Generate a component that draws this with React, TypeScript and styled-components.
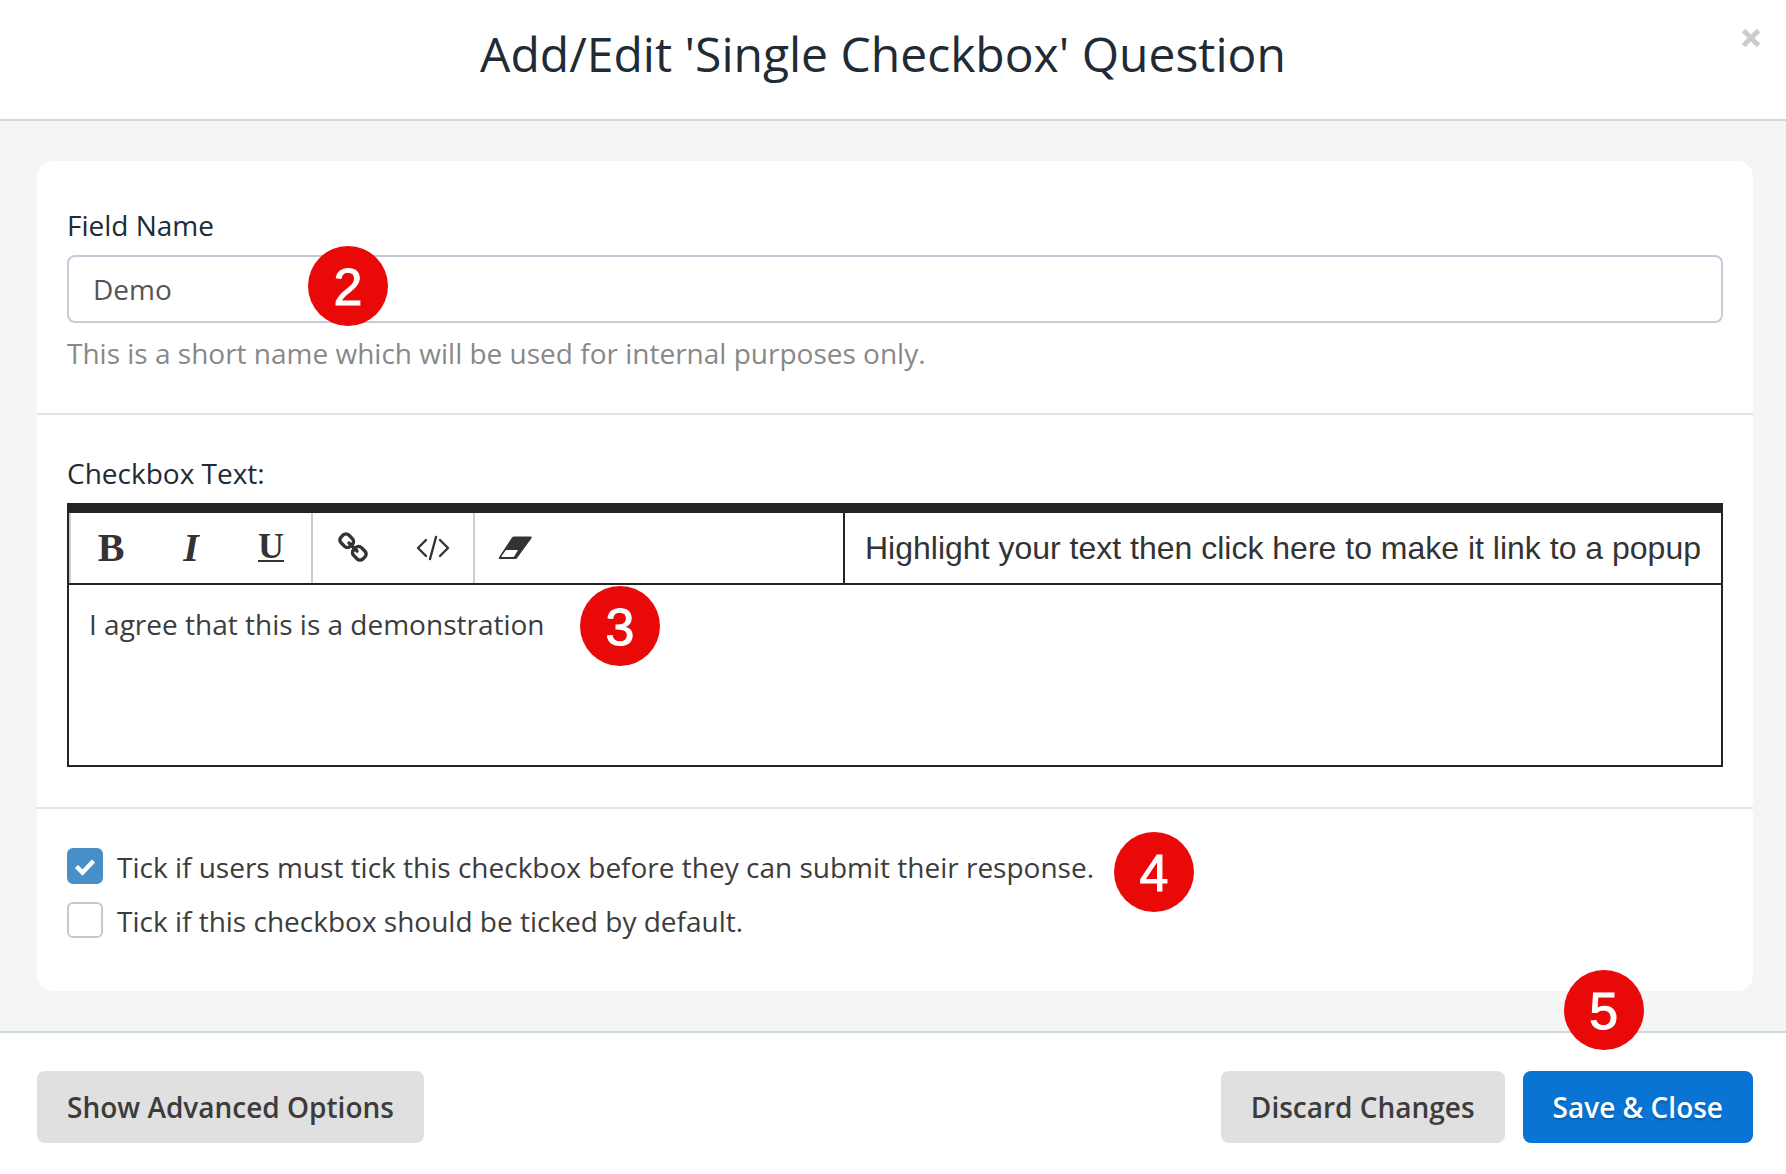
import React from "react";
import styled, { createGlobalStyle } from "styled-components";

const sans = `"Open Sans", "Noto Sans", sans-serif`;
const arial = `"Liberation Sans", Arial, sans-serif`;
const serif = `"Liberation Serif", "Times New Roman", serif`;

const GlobalStyle = createGlobalStyle`
  *, *::before, *::after { box-sizing: border-box; }
  body { margin: 0; background: #fff; }
  button, input, textarea { font: inherit; color: inherit; margin: 0; }
`;

const Dialog = styled.div`
  display: flex;
  flex-direction: column;
  min-height: 100vh;
  background: #fff;
  color: #3c3c3c;
  font: 400 28px/40px ${sans};
`;

const Header = styled.header`
  display: flex;
  align-items: flex-start;
  gap: 15px;
  padding: 20px 25px 31px 40px;
  border-bottom: 2px solid #cfd8dc;
`;

const Title = styled.h1`
  flex: 1;
  margin: 0;
  text-align: center;
  color: #202b36;
  font-size: 48px;
  font-weight: 400;
  line-height: 68px;
`;

const CloseButton = styled.button`
  display: flex;
  margin-top: 8px;
  padding: 0;
  border: 0;
  background: none;
  color: #ccc;
  cursor: pointer;
`;

const Body = styled.main`
  flex: 1;
  padding: 40px 33px 40px 37px;
  background: #f4f6f6;
`;

const Card = styled.form`
  padding: 6px 0 10px;
  border-radius: 16px;
  background: #fff;
`;

const Section = styled.section`
  display: flex;
  flex-direction: column;
  gap: 10px;
  padding: 38px 30px 40px;

  & + & {
    border-top: 2px solid #dfe4e7;
  }
`;

const Label = styled.label`
  color: #202b36;
`;

const Anchor = styled.div`
  position: relative;
  display: flex;
`;

const TextInput = styled.input`
  width: 100%;
  height: 68px;
  padding: 0 24px;
  border: 2px solid #c3cdd7;
  border-radius: 8px;
  background: #fff;
  color: #555;
`;

const Help = styled.p`
  margin: 0;
  color: #888;
`;

const Badge = styled.span<{ $left: number; $top: number }>`
  position: absolute;
  left: ${(p) => p.$left}px;
  top: ${(p) => p.$top}px;
  width: 80px;
  height: 80px;
  border-radius: 50%;
  background: #ea0909;
  color: #fff;
  font: 400 52px/82px ${arial};
  -webkit-text-stroke: 1px #fff;
  text-align: center;
`;

const Editor = styled.div`
  flex: 1;
  display: flex;
  flex-direction: column;
  border: 2px solid #242424;
  border-top-width: 10px;
`;

const Toolbar = styled.div`
  display: flex;
  height: 72px;
  border-bottom: 2px solid #242424;
  color: #333;
`;

const ToolGroup = styled.div`
  display: flex;
  border-left: 2px solid #ccc;
`;

const Tool = styled.button`
  display: flex;
  align-items: center;
  justify-content: center;
  width: 80px;
  padding: 0;
  border: 0;
  background: none;
  cursor: pointer;
`;

const Glyph = styled.span<{ $italic?: boolean }>`
  font: ${(p) => (p.$italic ? "italic" : "normal")} 700 40px/40px ${serif};
`;

const UnderlineGlyph = styled.span`
  height: 28px;
  border-bottom: 2px solid #333;
  font: 700 36px/24px ${serif};
`;

const PopupButton = styled.button`
  margin-left: auto;
  padding: 0 20px;
  border: 0;
  border-left: 2px solid #242424;
  background: none;
  font: 400 32px/40px ${arial};
  cursor: pointer;
`;

const EditArea = styled.textarea`
  display: block;
  width: 100%;
  height: 180px;
  padding: 19px 20px;
  border: 0;
  outline: 0;
  resize: none;
  background: #fff;
`;

const Options = styled.div`
  display: flex;
  flex-direction: column;
  align-items: flex-start;
  gap: 14px;
`;

const Option = styled.label`
  display: flex;
  align-items: flex-start;
  gap: 14px;
`;

const Tick = styled.span`
  position: relative;
  display: flex;
`;

const TickInput = styled.input`
  appearance: none;
  width: 36px;
  height: 36px;
  margin-top: 1px;
  border: 2px solid #c8c8c8;
  border-radius: 6px;
  background: #fff;

  &:checked {
    border-color: #478fc6;
    background: #478fc6;
  }

  & + svg {
    display: none;
  }

  &:checked + svg {
    display: block;
    position: absolute;
    inset: 0;
    pointer-events: none;
  }
`;

const Footer = styled.footer`
  display: flex;
  justify-content: space-between;
  padding: 38px 33px 31px 37px;
  border-top: 2px solid #cfd8dc;
`;

const Actions = styled.div`
  display: flex;
  gap: 18px;
`;

const Button = styled.button<{ $primary?: boolean }>`
  height: 72px;
  padding: 0 30px;
  border: 0;
  border-radius: 8px;
  background: ${(p) => (p.$primary ? "#0a74d4" : "#e0e0e0")};
  color: ${(p) => (p.$primary ? "#fff" : "#3c3c3c")};
  font-weight: 600;
  text-shadow: ${(p) => (p.$primary ? "0 2px 2px rgba(0, 0, 0, 0.2)" : "none")};
  white-space: nowrap;
  cursor: pointer;
`;

function CloseIcon() {
  return (
    <svg width="20" height="20" viewBox="0 0 20 20" aria-hidden="true">
      <path d="M2.5 2.5 17.5 17.5M17.5 2.5 2.5 17.5" stroke="currentColor" strokeWidth="5" />
    </svg>
  );
}

function LinkIcon() {
  return (
    <svg width="30" height="32" viewBox="0 0 30 32" fill="none" stroke="currentColor" strokeWidth="3.4" aria-hidden="true">
      <rect x="-5.5" y="-6.5" width="11" height="13" rx="4" transform="translate(8.7 8.7) rotate(-45)" />
      <rect x="-5.5" y="-6.5" width="11" height="13" rx="4" transform="translate(21.3 21.3) rotate(-45)" />
      <path d="m11 11 8 8" strokeLinecap="round" />
    </svg>
  );
}

function CodeIcon() {
  return (
    <svg width="34" height="26" viewBox="0 0 34 26" fill="none" stroke="currentColor" strokeWidth="2.4" strokeLinecap="round" strokeLinejoin="round" aria-hidden="true">
      <path d="M10 5 2 13l8 8M24 5l8 8-8 8M20 2l-6 22" />
    </svg>
  );
}

function EraserIcon() {
  return (
    <svg width="36" height="24" viewBox="0 0 36 24" aria-hidden="true">
      <path d="M17 .5h16.500q2 0 .8 2L20.500 21.500q-1 1.500-2.500 1.500H3q-2 0-.8-2L15 1.500q.8-1 2-1Z" fill="currentColor" />
      <path d="M9 14h12L17.500 20q-.5.900-1.300.900H5q-1 0-.4-.8Z" fill="#fff" />
    </svg>
  );
}

function CheckIcon() {
  return (
    <svg width="36" height="36" viewBox="0 0 36 36" fill="none" aria-hidden="true">
      <path d="m9.500 19.500 6 6L26.500 14" stroke="#fff" strokeWidth="4.500" />
    </svg>
  );
}

export default function App() {
  return (
    <Dialog role="dialog" aria-labelledby="dialog-title">
      <GlobalStyle />
      <Header>
        <Title id="dialog-title">Add/Edit 'Single Checkbox' Question</Title>
        <CloseButton type="button" aria-label="Close">
          <CloseIcon />
        </CloseButton>
      </Header>

      <Body>
        <Card>
          <Section>
            <Label htmlFor="field-name">Field Name</Label>
            <Anchor>
              <TextInput id="field-name" type="text" defaultValue="Demo" />
              <Badge $left={241} $top={-9}>2</Badge>
            </Anchor>
            <Help>This is a short name which will be used for internal purposes only.</Help>
          </Section>

          <Section>
            <Label htmlFor="checkbox-text">Checkbox Text:</Label>
            <Anchor>
              <Editor>
                <Toolbar>
                  <ToolGroup>
                    <Tool type="button" aria-label="Bold"><Glyph>B</Glyph></Tool>
                    <Tool type="button" aria-label="Italic"><Glyph $italic>I</Glyph></Tool>
                    <Tool type="button" aria-label="Underline"><UnderlineGlyph>U</UnderlineGlyph></Tool>
                  </ToolGroup>
                  <ToolGroup>
                    <Tool type="button" aria-label="Link"><LinkIcon /></Tool>
                    <Tool type="button" aria-label="Code"><CodeIcon /></Tool>
                  </ToolGroup>
                  <ToolGroup>
                    <Tool type="button" aria-label="Clear formatting"><EraserIcon /></Tool>
                  </ToolGroup>
                  <PopupButton type="button">
                    Highlight your text then click here to make it link to a popup
                  </PopupButton>
                </Toolbar>
                <EditArea id="checkbox-text" defaultValue="I agree that this is a demonstration" />
              </Editor>
              <Badge $left={513} $top={83}>3</Badge>
            </Anchor>
          </Section>

          <Section>
            <Anchor>
              <Options>
                <Option>
                  <Tick>
                    <TickInput type="checkbox" defaultChecked />
                    <CheckIcon />
                  </Tick>
                  Tick if users must tick this checkbox before they can submit their response.
                </Option>
                <Option>
                  <Tick>
                    <TickInput type="checkbox" />
                    <CheckIcon />
                  </Tick>
                  Tick if this checkbox should be ticked by default.
                </Option>
              </Options>
              <Badge $left={1047} $top={-15}>4</Badge>
            </Anchor>
          </Section>
        </Card>
      </Body>

      <Footer>
        <Button type="button">Show Advanced Options</Button>
        <Actions>
          <Button type="button">Discard Changes</Button>
          <Anchor>
            <Button type="button" $primary>Save &amp; Close</Button>
            <Badge $left={41} $top={-101}>5</Badge>
          </Anchor>
        </Actions>
      </Footer>
    </Dialog>
  );
}
